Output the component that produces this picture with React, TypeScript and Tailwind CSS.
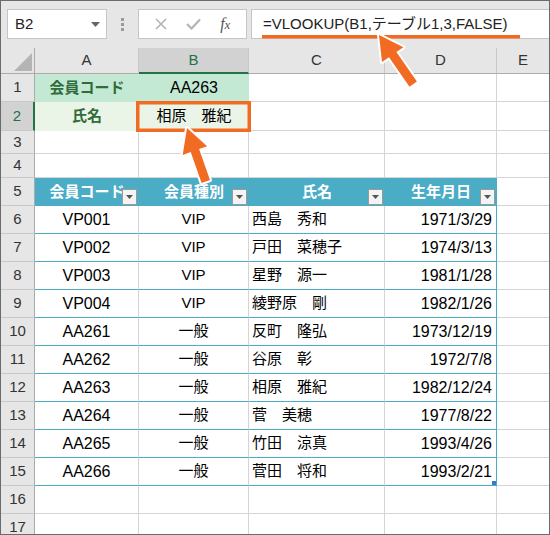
import React from "react";

const rows = [
  ["VP001", "VIP", "西島　秀和", "1971/3/29"],
  ["VP002", "VIP", "戸田　菜穂子", "1974/3/13"],
  ["VP003", "VIP", "星野　源一", "1981/1/28"],
  ["VP004", "VIP", "綾野原　剛", "1982/1/26"],
  ["AA261", "一般", "反町　隆弘", "1973/12/19"],
  ["AA262", "一般", "谷原　彰", "1972/7/8"],
  ["AA263", "一般", "相原　雅紀", "1982/12/24"],
  ["AA264", "一般", "菅　美穂", "1977/8/22"],
  ["AA265", "一般", "竹田　涼真", "1993/4/26"],
  ["AA266", "一般", "菅田　将和", "1993/2/21"],
];

function RowHead({ n, selected }: { n: number; selected?: boolean }) {
  return (
    <div
      className={
        "w-[34px] shrink-0 flex items-center justify-center text-[15px] border-b border-b-[#c8c8c8] " +
        (selected
          ? "bg-[#d2d2d2] text-[#217346] border-r-2 border-r-[#217346]"
          : "bg-[#e6e6e6] text-[#333] border-r border-r-[#ababab]")
      }
    >
      {n}
    </div>
  );
}

function FilterBtn() {
  return (
    <div className="absolute right-[2px] bottom-[1px] w-[15px] h-[16px] bg-[#f4f4f4] border border-[#9a9a9a] flex items-center justify-center">
      <svg width="7" height="4" viewBox="0 0 7 4">
        <path d="M0 0h7L3.5 4z" fill="#555" />
      </svg>
    </div>
  );
}

function EmptyRow({ n, h }: { n: number; h: string }) {
  return (
    <div className={"flex " + h}>
      <RowHead n={n} />
      <div className="w-[104px] border-r border-b border-[#d4d4d4]" />
      <div className="w-[110px] border-r border-b border-[#d4d4d4]" />
      <div className="w-[136px] border-r border-b border-[#d4d4d4]" />
      <div className="w-[112px] border-r border-b border-[#d4d4d4]" />
      <div className="flex-1 border-b border-[#d4d4d4]" />
    </div>
  );
}

export default function App() {
  return (
    <div className="relative w-[550px] h-[535px] overflow-hidden bg-white border border-[#6b6b6b] font-['Liberation_Sans','Noto_Sans_CJK_JP',sans-serif] text-black">
      {/* toolbar */}
      <div className="h-[47px] bg-[#e6e6e6] flex items-start pt-[8px] pl-[6px]">
        <div className="w-[100px] h-[30px] bg-white border border-[#c6c6c6] flex items-center justify-between pl-[7px] pr-[6px]">
          <span className="text-[15px] text-[#222]">B2</span>
          <svg width="9" height="5" viewBox="0 0 9 5">
            <path d="M0 0h9L4.5 5z" fill="#666" />
          </svg>
        </div>
        <div className="w-[31px] h-[30px] flex flex-col items-center justify-center gap-[2px]">
          <span className="w-[3px] h-[3px] bg-[#9a9a9a]" />
          <span className="w-[3px] h-[3px] bg-[#9a9a9a]" />
          <span className="w-[3px] h-[3px] bg-[#9a9a9a]" />
        </div>
        <div className="w-[109px] h-[30px] bg-white border border-[#c6c6c6] flex items-center justify-around px-[6px]">
          <svg width="12" height="12" viewBox="0 0 12 12">
            <path d="M1 1l10 10M11 1L1 11" stroke="#b4b4b4" strokeWidth="1.6" />
          </svg>
          <svg width="15" height="12" viewBox="0 0 15 12">
            <path d="M1 6l4.5 4.5L14 1.5" stroke="#b4b4b4" strokeWidth="2.2" fill="none" />
          </svg>
          <span className="font-['Liberation_Serif',serif] italic text-[16px] text-[#555] leading-none">
            f<span className="text-[13px]">x</span>
          </span>
        </div>
        <div className="ml-[4px] flex-1 h-[30px] bg-white border border-[#c6c6c6] border-r-0 flex items-center pl-[11px]">
          <span className="text-[15px] text-[#222] whitespace-nowrap">=VLOOKUP(B1,テーブル1,3,FALSE)</span>
        </div>
      </div>

      {/* column headers */}
      <div className="flex h-[26px] bg-[#e6e6e6] text-[15px] text-[#333]">
        <div className="w-[34px] border-r border-b border-[#ababab] flex items-end justify-end pr-[2px] pb-[2px]">
          <svg width="18" height="18" viewBox="0 0 18 18">
            <path d="M18 0V18H0z" fill="#b4b4b4" />
          </svg>
        </div>
        <div className="w-[104px] border-r border-r-[#c8c8c8] border-b border-b-[#ababab] flex items-center justify-center">A</div>
        <div className="w-[110px] border-r border-r-[#c8c8c8] border-b-2 border-b-[#217346] bg-[#d2d2d2] text-[#217346] flex items-center justify-center">B</div>
        <div className="w-[136px] border-r border-r-[#c8c8c8] border-b border-b-[#ababab] flex items-center justify-center">C</div>
        <div className="w-[112px] border-r border-r-[#c8c8c8] border-b border-b-[#ababab] flex items-center justify-center">D</div>
        <div className="flex-1 border-b border-b-[#ababab] flex items-center justify-center">E</div>
      </div>

      {/* row 1 */}
      <div className="flex h-[28px]">
        <RowHead n={1} />
        <div className="w-[104px] bg-[#c3e9d4] flex items-center justify-center font-bold text-[15px] text-[#2f6b3b]">会員コード</div>
        <div className="w-[110px] bg-[#c3e9d4] flex items-center justify-center text-[16px]">AA263</div>
        <div className="w-[136px] border-r border-b border-[#d4d4d4]" />
        <div className="w-[112px] border-r border-b border-[#d4d4d4]" />
        <div className="flex-1 border-b border-[#d4d4d4]" />
      </div>

      {/* row 2 */}
      <div className="flex h-[29px]">
        <RowHead n={2} selected />
        <div className="w-[104px] bg-[#ebf5e7] flex items-center justify-center font-bold text-[15px] text-[#2f6b3b]">氏名</div>
        <div className="w-[110px] bg-[#ebf5e7] flex items-center justify-center text-[15px]">相原　雅紀</div>
        <div className="w-[136px] border-r border-b border-[#d4d4d4]" />
        <div className="w-[112px] border-r border-b border-[#d4d4d4]" />
        <div className="flex-1 border-b border-[#d4d4d4]" />
      </div>

      <EmptyRow n={3} h="h-[23px]" />
      <EmptyRow n={4} h="h-[24px]" />

      {/* table header row 5 */}
      <div className="flex h-[28px]">
        <RowHead n={5} />
        <div className="relative w-[104px] bg-[#4bacc6] flex items-center justify-center font-bold text-[15px] text-white">
          会員コード
          <FilterBtn />
        </div>
        <div className="relative w-[110px] bg-[#4bacc6] flex items-center justify-center font-bold text-[15px] text-white">
          会員種別
          <FilterBtn />
        </div>
        <div className="relative w-[136px] bg-[#4bacc6] flex items-center justify-center font-bold text-[15px] text-white">
          氏名
          <FilterBtn />
        </div>
        <div className="relative w-[112px] bg-[#4bacc6] flex items-center justify-center font-bold text-[15px] text-white">
          生年月日
          <FilterBtn />
        </div>
        <div className="flex-1 border-b border-[#d4d4d4]" />
      </div>

      {/* table data */}
      {rows.map((r, i) => (
        <div key={r[0]} className="flex h-[28px]">
          <RowHead n={i + 6} />
          <div className="w-[104px] border-r border-r-[#d4d4d4] border-b border-b-[#4bacc6] flex items-center justify-center text-[16px]">{r[0]}</div>
          <div className="w-[110px] border-r border-r-[#d4d4d4] border-b border-b-[#4bacc6] flex items-center justify-center text-[15px]">{r[1]}</div>
          <div className="w-[136px] border-r border-r-[#d4d4d4] border-b border-b-[#4bacc6] flex items-center pl-[3px] text-[15px] whitespace-nowrap">{r[2]}</div>
          <div className="relative w-[112px] border-r border-r-[#4bacc6] border-b border-b-[#4bacc6] flex items-center justify-end pr-[4px] text-[16px]">
            {r[3]}
            {i === rows.length - 1 && <span className="absolute right-0 bottom-0 w-[4px] h-[4px] bg-[#3a78c8]" />}
          </div>
          <div className="flex-1 border-b border-[#d4d4d4]" />
        </div>
      ))}

      <EmptyRow n={16} h="h-[28px]" />
      <EmptyRow n={17} h="h-[28px]" />

      {/* annotations */}
      <svg className="absolute left-[-1px] top-[-1px] pointer-events-none" width="550" height="535" viewBox="0 0 550 535">
        <rect x="262" y="35" width="258" height="3.5" fill="#f26b23" />
        <rect x="137.75" y="102.75" width="111.5" height="27.5" fill="none" stroke="#f26b23" strokeWidth="3.5" />
        <polygon
          points="379,35 403.4,47.3 396.4,52.1 416.9,81.6 409.5,86.8 389,57.3 382,62.1"
          fill="#f26b23"
          stroke="#fff"
          strokeWidth="4"
          strokeLinejoin="round"
          paintOrder="stroke"
        />
        <polygon
          points="187,128 207.1,146.3 199.1,149.1 210,180.1 201.6,183.1 190.7,152.1 182.7,154.9"
          fill="#f26b23"
          stroke="#fff"
          strokeWidth="4"
          strokeLinejoin="round"
          paintOrder="stroke"
        />
      </svg>
    </div>
  );
}
